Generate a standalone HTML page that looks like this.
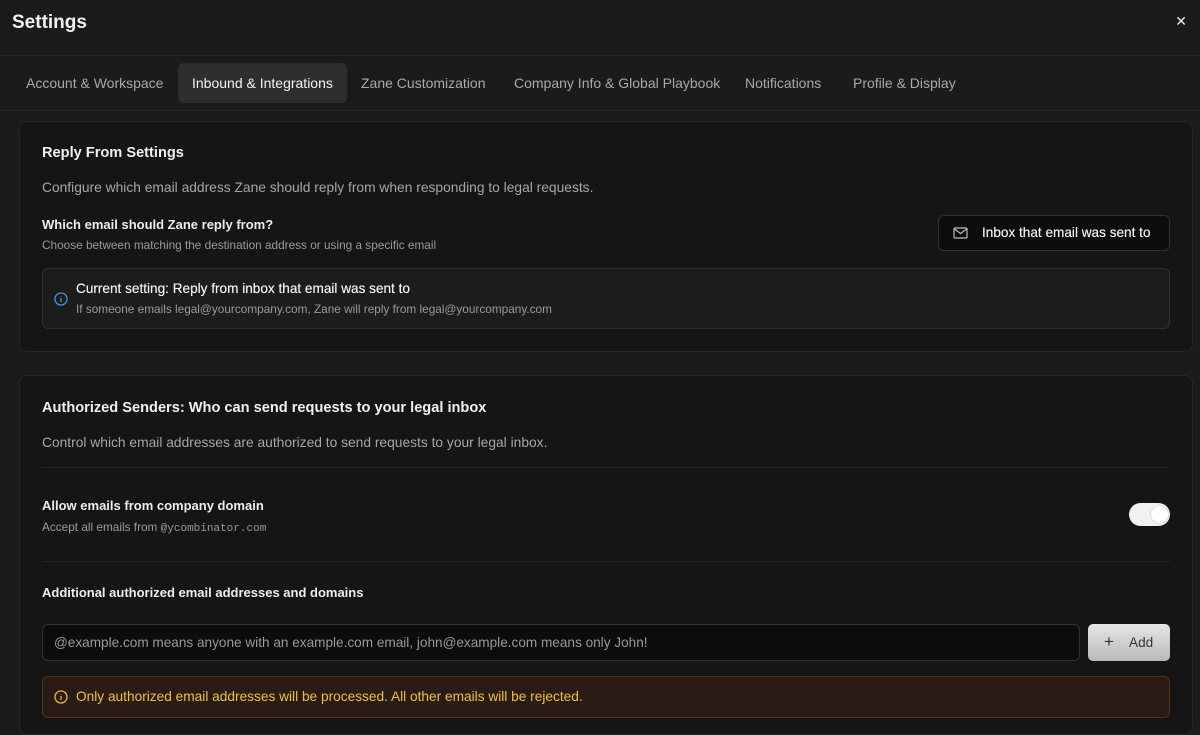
<!DOCTYPE html>
<html><head><style>
*{box-sizing:border-box;margin:0;padding:0}
body{width:1200px;height:723px;overflow:hidden;background:#1b1b1b;font-family:"Liberation Sans",sans-serif;color:#ececec;position:relative}
.abs{position:absolute;white-space:nowrap}
.title{left:12px;top:12px;font-size:19px;font-weight:bold;color:#f2f2f2}
.close{right:13px;top:13px;font-size:14px;color:#eee}
.hl{left:0;width:1200px;height:1px;background:#2a2a2a}
.tab{top:63px;height:40px;line-height:40px;font-size:14px;color:#a9a9a9;padding:0 14px}
.tab.act{background:#2e2e2e;color:#f4f4f4;border-radius:6px}
.card{left:19px;width:1174px;background:#151515;border:1px solid #272727;border-radius:8px}
.h{font-size:14.6px;color:#f0f0f0;font-weight:bold}
.p{font-size:13.8px;color:#a6a6a6}
.b{font-size:13px;font-weight:bold;color:#eee}
.s{font-size:11.8px;color:#9a9a9a}
</style></head><body>
<div class="abs title">Settings</div>
<div class="abs close">✕</div>
<div class="abs hl" style="top:55px"></div>
<div class="abs hl" style="top:110px"></div>
<div class="abs tab" style="left:12px">Account &amp; Workspace</div>
<div class="abs tab act" style="left:178px;width:169px">Inbound &amp; Integrations</div>
<div class="abs tab" style="left:347px">Zane Customization</div>
<div class="abs tab" style="left:500px">Company Info &amp; Global Playbook</div>
<div class="abs tab" style="left:731px">Notifications</div>
<div class="abs tab" style="left:839px">Profile &amp; Display</div>

<div class="abs card" style="top:121px;height:231px"></div>
<div class="abs h" style="left:42px;top:145px">Reply From Settings</div>
<div class="abs p" style="left:42px;top:180px">Configure which email address Zane should reply from when responding to legal requests.</div>
<div class="abs b" style="left:42px;top:217px">Which email should Zane reply from?</div>
<div class="abs s" style="left:42px;top:238px">Choose between matching the destination address or using a specific email</div>
<div class="abs" style="left:938px;top:215px;width:232px;height:36px;background:#0d0d0d;border:1px solid #333;border-radius:6px"></div>
<svg class="abs" style="left:953px;top:226px" width="15" height="14" viewBox="0 0 15 14"><rect x="1" y="2" width="13" height="10" rx="1" fill="none" stroke="#bbb" stroke-width="1.2"/><path d="M1.5 3l6 4.5 6-4.5" fill="none" stroke="#bbb" stroke-width="1.2"/></svg>
<div class="abs" style="left:982px;top:225px;font-size:13.6px;color:#f2f2f2;text-shadow:0 0 0.4px #f2f2f2">Inbox that email was sent to</div>
<div class="abs" style="left:42px;top:268px;width:1128px;height:61px;background:#1c1c1c;border:1px solid #303030;border-radius:6px"></div>
<svg class="abs" style="left:54px;top:292px" width="14" height="14" viewBox="0 0 14 14"><circle cx="7" cy="7" r="6" fill="none" stroke="#4a8fe0" stroke-width="1.3"/><path d="M7 6v4M7 4v.5" stroke="#4a8fe0" stroke-width="1.3"/></svg>
<div class="abs" style="left:76px;top:281px;font-size:13.6px;color:#f4f4f4;text-shadow:0 0 0.4px #f4f4f4">Current setting: Reply from inbox that email was sent to</div>
<div class="abs s" style="left:76px;top:302px">If someone emails legal@yourcompany.com, Zane will reply from legal@yourcompany.com</div>

<div class="abs card" style="top:375px;height:360px"></div>
<div class="abs h" style="left:42px;top:400px">Authorized Senders: Who can send requests to your legal inbox</div>
<div class="abs p" style="left:42px;top:435px">Control which email addresses are authorized to send requests to your legal inbox.</div>
<div class="abs" style="left:42px;top:467px;width:1128px;height:1px;background:#262626"></div>
<div class="abs b" style="left:42px;top:498px">Allow emails from company domain</div>
<div class="abs s" style="left:42px;top:520px">Accept all emails from <span style="font-family:'Liberation Mono',monospace;font-size:11px">@ycombinator.com</span></div>
<div class="abs" style="left:1129px;top:503px;width:41px;height:23px;background:#f2f2f2;border-radius:12px"></div>
<div class="abs" style="left:1150px;top:505px;width:19px;height:19px;background:#fff;border:1px solid #ddd;border-radius:50%"></div>
<div class="abs" style="left:42px;top:561px;width:1128px;height:1px;background:#262626"></div>
<div class="abs b" style="left:42px;top:585px">Additional authorized email addresses and domains</div>
<div class="abs" style="left:42px;top:624px;width:1038px;height:37px;background:#0c0c0c;border:1px solid #333;border-radius:6px"></div>
<div class="abs" style="left:54px;top:635px;font-size:13.6px;color:#999">@example.com means anyone with an example.com email, john@example.com means only John!</div>
<div class="abs" style="left:1088px;top:624px;width:82px;height:37px;background:linear-gradient(#e6e6e6,#b9b9b9);border-radius:5px"></div>
<div class="abs" style="left:1104px;top:632px;font-size:17px;color:#333">+</div>
<div class="abs" style="left:1129px;top:635px;font-size:13.6px;color:#333">Add</div>
<div class="abs" style="left:42px;top:676px;width:1128px;height:42px;background:#2a1c14;border:1px solid #5a3218;border-radius:6px"></div>
<svg class="abs" style="left:54px;top:690px" width="14" height="14" viewBox="0 0 14 14"><circle cx="7" cy="7" r="6" fill="none" stroke="#e8b73a" stroke-width="1.3"/><path d="M7 6v4M7 4v.5" stroke="#e8b73a" stroke-width="1.3"/></svg>
<div class="abs" style="left:76px;top:689px;font-size:13.7px;color:#eec040">Only authorized email addresses will be processed. All other emails will be rejected.</div>
</body></html>
